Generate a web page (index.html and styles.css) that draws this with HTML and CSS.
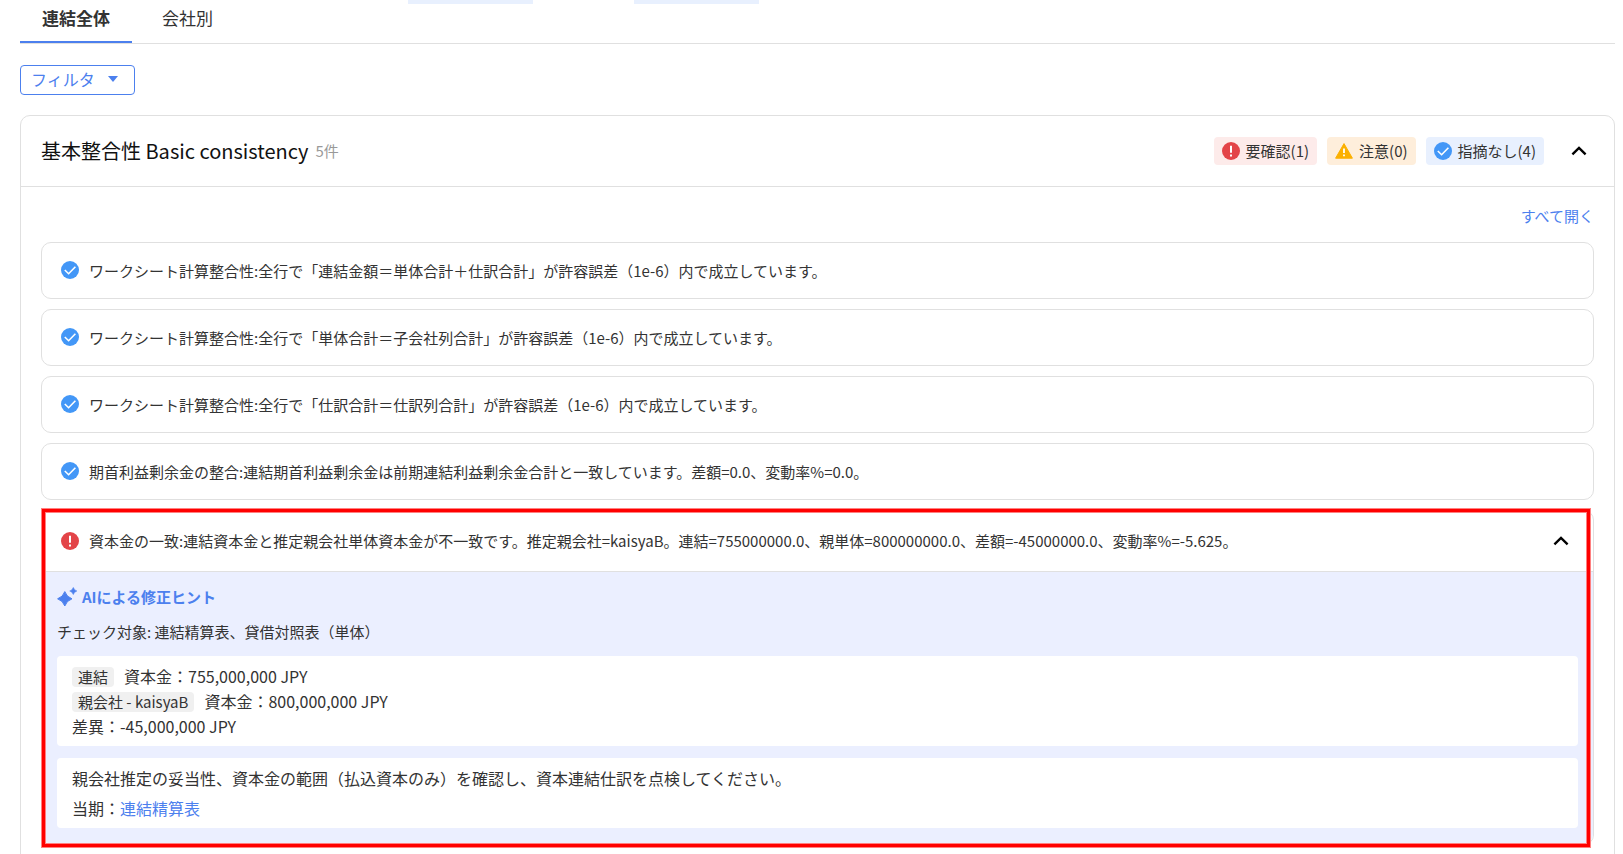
FILE: index.html
```html
<!DOCTYPE html>
<html lang="ja">
<head>
<meta charset="utf-8">
<title>基本整合性 Basic consistency</title>
<link rel="stylesheet" href="styles.css">
</head>
<body>
<svg class="sprite" aria-hidden="true">
  <symbol id="icon-check" viewBox="0 0 18 18">
    <circle cx="9" cy="9" r="9" fill="#4397f7"/>
    <path d="M3.8 9l3.8 3.7 6.8-7" fill="none" stroke="#fff" stroke-width="1.6"/>
  </symbol>
  <symbol id="icon-error" viewBox="0 0 18 18">
    <circle cx="9" cy="9" r="9" fill="#e34448"/>
    <path d="M8 3.7h2v7H8zM8 12.4h2v2H8z" fill="#fff"/>
  </symbol>
  <symbol id="icon-warn" viewBox="0 0 18 18">
    <path d="M9 1.600L17.400 16.200H.6z" fill="#fbb000" stroke="#fbb000" stroke-width="1" stroke-linejoin="round"/>
    <path d="M8.100 6.600h1.800v4.400H8.100zM8.100 12.400h1.800v1.800H8.100z" fill="#fff"/>
  </symbol>
  <symbol id="icon-up" viewBox="0 0 16 10">
    <path d="M1.400 8.400L8 2l6.600 6.400" fill="none" stroke="#000" stroke-width="2.400"/>
  </symbol>
  <symbol id="icon-spark" viewBox="0 0 20 20">
    <path d="M7.800 4.600Q9.600 10 15 11.800Q9.600 13.600 7.800 19Q6 13.600 .6 11.800Q6 10 7.800 4.600z" fill="#4c80ee" stroke="#4c80ee" stroke-width="1" stroke-linejoin="round"/>
    <path d="M16.300 .4Q17.200 3.100 19.900 4Q17.200 4.900 16.300 7.600Q15.400 4.900 12.700 4Q15.400 3.100 16.300 .4z" fill="#4c80ee" stroke="#4c80ee" stroke-width=".5"/>
  </symbol>
</svg>

<div class="strip"><span class="strip-item"></span><span class="strip-item"></span></div>

<main class="page">
  <nav class="tabs" role="tablist">
    <button class="tab tab-active" role="tab" aria-selected="true">連結全体</button>
    <button class="tab" role="tab" aria-selected="false">会社別</button>
  </nav>

  <button class="filter">フィルタ<svg class="caret" viewBox="0 0 10 6" aria-hidden="true"><path d="M0 0h10L5 6z" fill="#4c80ee"/></svg></button>

  <section class="card">
    <header class="card-head">
      <h2 class="card-title">基本整合性 Basic consistency</h2>
      <span class="count">5件</span>
      <div class="badges">
        <span class="badge badge-error"><svg class="icon"><use href="#icon-error"/></svg>要確認(1)</span>
        <span class="badge badge-warn"><svg class="icon"><use href="#icon-warn"/></svg>注意(0)</span>
        <span class="badge badge-ok"><svg class="icon"><use href="#icon-check"/></svg>指摘なし(4)</span>
      </div>
      <button class="toggle" aria-label="閉じる"><svg class="chevron"><use href="#icon-up"/></svg></button>
    </header>

    <div class="card-body">
      <a class="link open-all" href="#">すべて開く</a>
      <ul class="items">
        <li class="item"><div class="item-head"><svg class="icon"><use href="#icon-check"/></svg><span class="item-text">ワークシート計算整合性:全行で「連結金額＝単体合計＋仕訳合計」が許容誤差（1e-6）内で成立しています。</span></div></li>
        <li class="item"><div class="item-head"><svg class="icon"><use href="#icon-check"/></svg><span class="item-text">ワークシート計算整合性:全行で「単体合計＝子会社列合計」が許容誤差（1e-6）内で成立しています。</span></div></li>
        <li class="item"><div class="item-head"><svg class="icon"><use href="#icon-check"/></svg><span class="item-text">ワークシート計算整合性:全行で「仕訳合計＝仕訳列合計」が許容誤差（1e-6）内で成立しています。</span></div></li>
        <li class="item"><div class="item-head"><svg class="icon"><use href="#icon-check"/></svg><span class="item-text">期首利益剰余金の整合:連結期首利益剰余金は前期連結利益剰余金合計と一致しています。差額=0.0、変動率%=0.0。</span></div></li>
        <li class="item item-open">
          <div class="item-head"><svg class="icon"><use href="#icon-error"/></svg><span class="item-text">資本金の一致:連結資本金と推定親会社単体資本金が不一致です。推定親会社=kaisyaB。連結=755000000.0、親単体=800000000.0、差額=-45000000.0、変動率%=-5.625。</span>
            <button class="toggle" aria-label="閉じる"><svg class="chevron"><use href="#icon-up"/></svg></button></div>
          <div class="hint">
            <h3 class="hint-title"><svg class="spark"><use href="#icon-spark"/></svg>AIによる修正ヒント</h3>
            <p class="hint-target">チェック対象: 連結精算表、貸借対照表（単体）</p>
            <div class="box box-values">
              <p class="value"><span class="chip">連結</span>資本金：755,000,000 JPY</p>
              <p class="value"><span class="chip">親会社 - kaisyaB</span>資本金：800,000,000 JPY</p>
              <p class="value">差異：-45,000,000 JPY</p>
            </div>
            <div class="box box-advice">
              <p class="advice">親会社推定の妥当性、資本金の範囲（払込資本のみ）を確認し、資本連結仕訳を点検してください。</p>
              <p class="advice">当期：<a class="link" href="#">連結精算表</a></p>
            </div>
          </div>
          <div class="highlight"></div>
        </li>
      </ul>
    </div>
  </section>
</main>
</body>
</html>
```

FILE: styles.css
```css
* { box-sizing: border-box; }

body {
  margin: 0;
  height: 100vh;
  overflow: hidden;
  background: #fff;
  color: #333;
  font-family: "Noto Sans CJK JP", "Noto Sans", sans-serif;
  font-size: 15px;
  line-height: 24px;
}

h2, h3, p, ul { margin: 0; padding: 0; }
ul { list-style: none; }
button { font-family: inherit; background: none; border: 0; padding: 0; cursor: pointer; }
svg { display: block; flex: none; }

.sprite { display: none; }
.icon { width: 18px; height: 18px; }
.chevron { width: 16px; height: 10px; }
.link { color: #4c80ee; text-decoration: none; }

.strip { display: flex; gap: 101px; height: 4px; padding-left: 408px; }
.strip-item { width: 125px; background: #e8f0fe; }

.page { padding: 0 8px 20px 20px; }

.tabs { display: flex; gap: 8px; height: 40px; border-bottom: 1px solid #e0e0e0; }
.tab {
  padding: 0 22px 10px;
  border-bottom: 2px solid transparent;
  color: #333;
  font-size: 17px;
  line-height: 26px;
}
.tab-active { border-color: #4c80ee; font-weight: 700; }

.filter {
  display: flex;
  align-items: center;
  gap: 13px;
  height: 30px;
  margin: 21px 0 20px;
  padding: 0 16px 2px 10px;
  border: 1px solid #4c80ee;
  border-radius: 4px;
  color: #4c80ee;
  font-size: 16px;
}
.caret { width: 10px; height: 6px; }

.card { border: 1px solid #e0e0e0; border-radius: 10px; }
.card-head {
  display: flex;
  align-items: center;
  height: 71px;
  padding: 0 20px;
  border-bottom: 1px solid #e0e0e0;
}
.card-title { color: #111; font-size: 20px; font-weight: 400; line-height: 30px; }
.count { margin-left: 7px; color: #999; font-size: 15px; }
.badges { display: flex; gap: 10px; margin-left: auto; }
.badge {
  display: flex;
  align-items: center;
  gap: 6px;
  height: 28px;
  padding: 0 8px;
  border-radius: 4px;
}
.badge-error { background: #fdebea; }
.badge-warn { background: #feeedb; }
.badge-ok { background: #e8f0fe; }
.toggle { display: flex; padding: 7px; }
.card-head .toggle { margin-left: 20px; }

.card-body { display: flex; flex-direction: column; padding: 17px 20px 20px; }
.open-all { align-self: flex-end; }

.items { display: flex; flex-direction: column; gap: 10px; margin-top: 14px; }
.item { border: 1px solid #e0e0e0; border-radius: 10px; }
.item-head { display: flex; align-items: center; gap: 10px; padding: 15px 19px; }
.item-head .icon { margin-bottom: 2px; }
.item-text { flex: 1; line-height: 25px; }

.item-open { position: relative; }
.item-open .item-head { padding: 17px 17px 18px 19px; border-bottom: 1px solid #e0e0e0; }
.item-open .icon { margin-bottom: 0; }
.highlight {
  position: absolute;
  inset: -2px 3px -3px 0;
  border: 3px solid #f00;
  box-shadow: 0 0 0 1px #ff8080, inset 0 0 0 1px #ff8080;
  pointer-events: none;
}

.hint { padding: 12px 15px 16px; border-radius: 0 0 10px 10px; background: #ebefff; }
.hint-title { display: flex; align-items: center; gap: 5px; color: #4c80ee; font-size: 15px; line-height: 25px; }
.spark { width: 20px; height: 20px; }
.hint-target { margin-top: 10px; line-height: 25px; }
.box { margin-top: 12px; padding: 8px 15px 7px; border-radius: 4px; background: #fff; font-size: 16px; }
.value { display: flex; align-items: center; line-height: 25px; }
.chip { margin-right: 10px; padding: 0 6px; border-radius: 4px; background: #f0f0f0; font-size: 15px; line-height: 20px; }
.box-advice { padding: 5px 15px; }
.advice { line-height: 30px; }
```
